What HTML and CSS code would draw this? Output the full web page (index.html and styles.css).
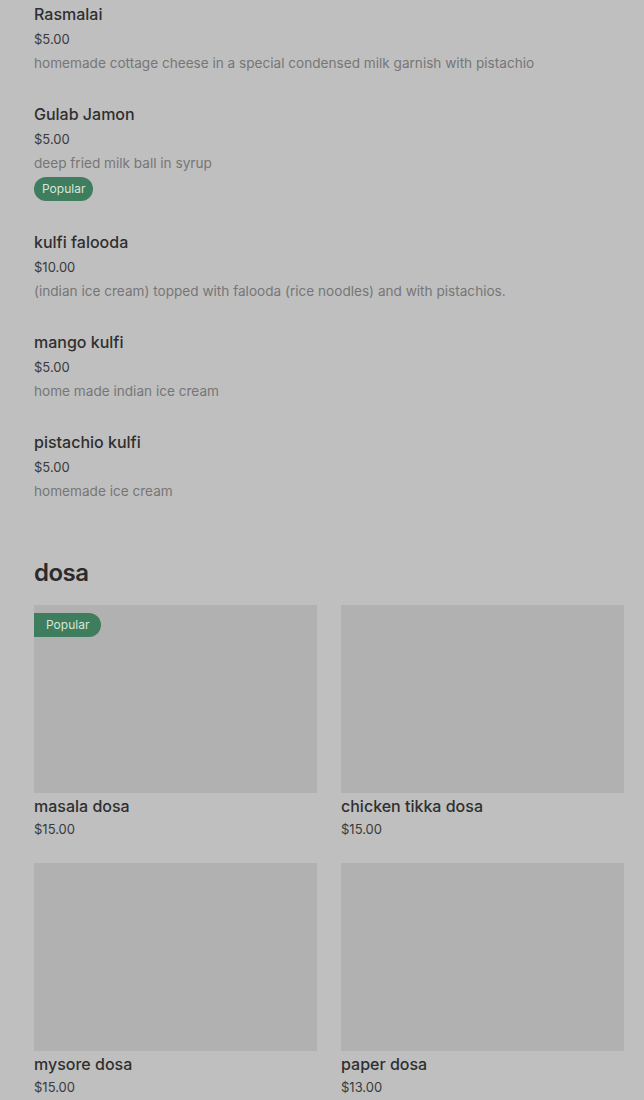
FILE: index.html
```html
<!DOCTYPE html>
<html>
<head>
<meta charset="utf-8">
<link rel="stylesheet" href="styles.css">
</head>
<body>
<div class="page">
  <ul class="list">
    <li class="item">
      <div class="name">Rasmalai</div>
      <div class="price">$5.00</div>
      <div class="desc">homemade cottage cheese in a special condensed milk garnish with pistachio</div>
    </li>
    <li class="item">
      <div class="name">Gulab Jamon</div>
      <div class="price">$5.00</div>
      <div class="desc">deep fried milk ball in syrup</div>
      <span class="badge">Popular</span>
    </li>
    <li class="item">
      <div class="name">kulfi falooda</div>
      <div class="price">$10.00</div>
      <div class="desc">(indian ice cream) topped with falooda (rice noodles) and with pistachios.</div>
    </li>
    <li class="item">
      <div class="name">mango kulfi</div>
      <div class="price">$5.00</div>
      <div class="desc">home made indian ice cream</div>
    </li>
    <li class="item">
      <div class="name">pistachio kulfi</div>
      <div class="price">$5.00</div>
      <div class="desc">homemade ice cream</div>
    </li>
  </ul>

  <h2 class="section-title">dosa</h2>
  <div class="grid">
    <div class="card">
      <div class="thumb"><span class="tag">Popular</span></div>
      <div class="name">masala dosa</div>
      <div class="price">$15.00</div>
    </div>
    <div class="card">
      <div class="thumb"></div>
      <div class="name">chicken tikka dosa</div>
      <div class="price">$15.00</div>
    </div>
    <div class="card">
      <div class="thumb"></div>
      <div class="name">mysore dosa</div>
      <div class="price">$15.00</div>
    </div>
    <div class="card">
      <div class="thumb"></div>
      <div class="name">paper dosa</div>
      <div class="price">$13.00</div>
    </div>
  </div>
</div>
</body>
</html>
```

FILE: styles.css
```css
html, body {
  margin: 0;
  padding: 0;
  background: #bfbfbf;
}
body {
  font-family: Inter, "Open Sans", sans-serif;
  color: #2e2e2e;
  height: 1100px;
  overflow: hidden;
}
.page {
  padding: 3px 20px 0 34px;
}
.list {
  list-style: none;
  margin: 0;
  padding: 0;
}
.item {
  display: flex;
  flex-direction: column;
  align-items: flex-start;
  padding-bottom: 29px;
}
.name {
  font-size: 16px;
  font-weight: 500;
  line-height: 22px;
  color: #2f2f2f;
}
.price {
  font-size: 13px;
  line-height: 22px;
  margin-top: 3px;
  color: #3a3a3a;
}
.desc {
  font-size: 13.6px;
  line-height: 22px;
  margin-top: 2px;
  color: #767676;
}
.badge {
  margin-top: 3px;
  margin-bottom: 1px;
  height: 24px;
  line-height: 24px;
  padding: 0 8px;
  border-radius: 12px;
  background: #3f7d5f;
  color: #d6e6dc;
  font-size: 12px;
}
.section-title {
  margin: 26px 0 0;
  font-size: 24px;
  font-weight: 600;
  line-height: 32px;
  color: #2b2b2b;
  letter-spacing: -0.5px;
}
.grid {
  display: grid;
  grid-template-columns: 1fr 1fr;
  column-gap: 24px;
  row-gap: 23px;
  margin-top: 16px;
}
.card {
  display: flex;
  flex-direction: column;
}
.thumb {
  position: relative;
  height: 188px;
  background: #b1b1b1;
}
.tag {
  position: absolute;
  top: 8px;
  left: 0;
  height: 24px;
  line-height: 24px;
  padding: 0 12px;
  border-radius: 0 12px 12px 0;
  background: #3f7d5f;
  color: #d6e6dc;
  font-size: 12px;
}
.card .name {
  margin-top: 2px;
}
.card .price {
  margin-top: 1px;
}
```
